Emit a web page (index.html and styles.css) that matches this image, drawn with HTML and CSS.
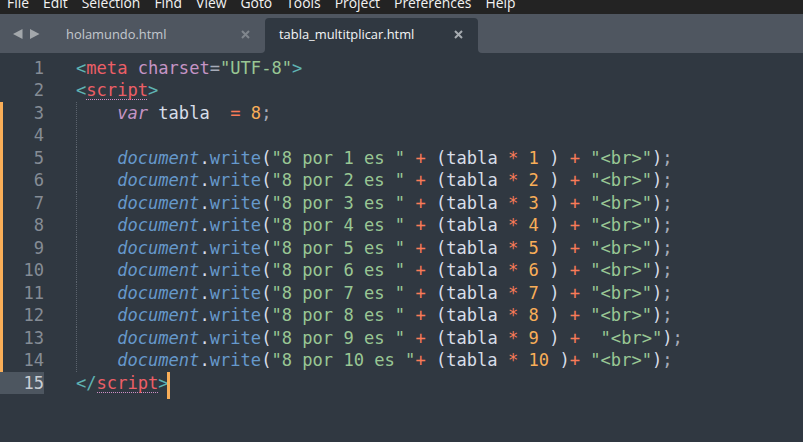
FILE: index.html
```html
<!DOCTYPE html>
<html>
<head>
<meta charset="UTF-8">
<link rel="stylesheet" href="styles.css">
</head>
<body>
<div class="menubar">
  <div class="menu-row">
    <span class="mi">File</span><span class="mi">Edit</span><span class="mi">Selection</span><span class="mi">Find</span><span class="mi">View</span><span class="mi">Goto</span><span class="mi">Tools</span><span class="mi">Project</span><span class="mi">Preferences</span><span class="mi">Help</span>
  </div>
</div>
<div class="tabbar">
  <div class="tabs-left">
    <div class="nav">
      <svg width="10" height="10" viewBox="0 0 10 10"><polygon points="0,5 9.5,0 9.5,10" fill="#a3a7ab"/></svg>
      <svg width="10" height="10" viewBox="0 0 10 10"><polygon points="0,0 9.5,5 0,10" fill="#a3a7ab"/></svg>
    </div>
    <div class="tab">
      <span class="label">holamundo.html</span>
      <svg class="close" width="9" height="9" viewBox="0 0 9 9"><path d="M1 1 L8 8 M8 1 L1 8" stroke="#80868d" stroke-width="2"/></svg>
    </div>
  </div>
  <div class="active-wrap">
    <div class="tab active">
      <span class="label">tabla_multitplicar.html</span>
      <svg class="close" width="9" height="9" viewBox="0 0 9 9"><path d="M1 1 L8 8 M8 1 L1 8" stroke="#a6abb0" stroke-width="2"/></svg>
    </div>
  </div>
  <div class="tabs-right"></div>
</div>
<div class="editor">
  <div class="gutter">
    <div class="ln">1</div>
    <div class="ln">2</div>
    <div class="ln mod">3</div>
    <div class="ln mod">4</div>
    <div class="ln mod">5</div>
    <div class="ln mod">6</div>
    <div class="ln mod">7</div>
    <div class="ln mod">8</div>
    <div class="ln mod">9</div>
    <div class="ln mod">10</div>
    <div class="ln mod">11</div>
    <div class="ln mod">12</div>
    <div class="ln mod">13</div>
    <div class="ln mod">14</div>
    <div class="ln cur">15</div>
  </div>
  <div class="code">
    <div class="line"><span class="p">&lt;</span><span class="t">meta</span> <span class="a">charset</span><span class="eq">=</span><span class="s">"UTF-8"</span><span class="p">&gt;</span></div>
    <div class="line"><span class="p">&lt;</span><span class="t spell">script</span><span class="p">&gt;</span></div>
    <div class="block">
      <div class="line">    <span class="k">var</span> tabla  <span class="o">=</span> <span class="n">8</span><span class="sc">;</span></div>
      <div class="line"> </div>
      <div class="line">    <span class="d">document</span>.<span class="f">write</span>(<span class="s">"8 por 1 es "</span> <span class="o">+</span> (tabla <span class="o">*</span> <span class="n">1</span> ) <span class="o">+</span> <span class="s">"&lt;br&gt;"</span>)<span class="sc">;</span></div>
      <div class="line">    <span class="d">document</span>.<span class="f">write</span>(<span class="s">"8 por 2 es "</span> <span class="o">+</span> (tabla <span class="o">*</span> <span class="n">2</span> ) <span class="o">+</span> <span class="s">"&lt;br&gt;"</span>)<span class="sc">;</span></div>
      <div class="line">    <span class="d">document</span>.<span class="f">write</span>(<span class="s">"8 por 3 es "</span> <span class="o">+</span> (tabla <span class="o">*</span> <span class="n">3</span> ) <span class="o">+</span> <span class="s">"&lt;br&gt;"</span>)<span class="sc">;</span></div>
      <div class="line">    <span class="d">document</span>.<span class="f">write</span>(<span class="s">"8 por 4 es "</span> <span class="o">+</span> (tabla <span class="o">*</span> <span class="n">4</span> ) <span class="o">+</span> <span class="s">"&lt;br&gt;"</span>)<span class="sc">;</span></div>
      <div class="line">    <span class="d">document</span>.<span class="f">write</span>(<span class="s">"8 por 5 es "</span> <span class="o">+</span> (tabla <span class="o">*</span> <span class="n">5</span> ) <span class="o">+</span> <span class="s">"&lt;br&gt;"</span>)<span class="sc">;</span></div>
      <div class="line">    <span class="d">document</span>.<span class="f">write</span>(<span class="s">"8 por 6 es "</span> <span class="o">+</span> (tabla <span class="o">*</span> <span class="n">6</span> ) <span class="o">+</span> <span class="s">"&lt;br&gt;"</span>)<span class="sc">;</span></div>
      <div class="line">    <span class="d">document</span>.<span class="f">write</span>(<span class="s">"8 por 7 es "</span> <span class="o">+</span> (tabla <span class="o">*</span> <span class="n">7</span> ) <span class="o">+</span> <span class="s">"&lt;br&gt;"</span>)<span class="sc">;</span></div>
      <div class="line">    <span class="d">document</span>.<span class="f">write</span>(<span class="s">"8 por 8 es "</span> <span class="o">+</span> (tabla <span class="o">*</span> <span class="n">8</span> ) <span class="o">+</span> <span class="s">"&lt;br&gt;"</span>)<span class="sc">;</span></div>
      <div class="line">    <span class="d">document</span>.<span class="f">write</span>(<span class="s">"8 por 9 es "</span> <span class="o">+</span> (tabla <span class="o">*</span> <span class="n">9</span> ) <span class="o">+</span>  <span class="s">"&lt;br&gt;"</span>)<span class="sc">;</span></div>
      <div class="line">    <span class="d">document</span>.<span class="f">write</span>(<span class="s">"8 por 10 es "</span><span class="o">+</span> (tabla <span class="o">*</span> <span class="n">10</span> )<span class="o">+</span> <span class="s">"&lt;br&gt;"</span>)<span class="sc">;</span></div>
    </div>
    <div class="line"><span class="p">&lt;/</span><span class="t spell">script</span><span class="p">&gt;</span><span class="caret"></span></div>
  </div>
</div>
</body>
</html>
```
FILE: styles.css
```css
html, body {
  margin: 0;
  padding: 0;
  background: #303841;
  overflow: hidden;
}
body {
  width: 803px;
  height: 442px;
}
.menubar {
  height: 14px;
  background: #232323;
  overflow: hidden;
}
.menu-row {
  display: flex;
  margin-top: -4.4px;
  font-family: "Open Sans", sans-serif;
  font-size: 13.9px;
  line-height: 14px;
  color: #f2f2f2;
  white-space: nowrap;
}
.mi {
  padding: 0 7px;
}
.tabbar {
  display: flex;
  height: 39px;
  background: #303841;
  font-family: "Open Sans", sans-serif;
  font-size: 12.9px;
}
.tabs-left {
  display: flex;
  width: 265px;
  background: #4f5660;
  border-bottom-right-radius: 4px;
}
.nav {
  width: 52px;
  box-sizing: border-box;
  display: flex;
  align-items: flex-start;
  padding-left: 13px;
  padding-top: 15.3px;
  gap: 7px;
}
.tab {
  width: 213px;
  box-sizing: border-box;
  display: flex;
  align-items: flex-start;
  padding: 10.85px 15px 0 14px;
  color: #c3c8ce;
  white-space: nowrap;
}
.label {
  line-height: normal;
}
.close {
  margin-left: auto;
  margin-top: 5px;
}
.active-wrap {
  background: #4f5660;
  padding-top: 3.5px;
  display: flex;
}
.tab.active {
  background: #303841;
  border-radius: 4px 4px 0 0;
  padding-top: 7.35px;
  color: #f4f5f6;
  align-self: stretch;
}
.tabs-right {
  flex: 1;
  background: #4f5660;
  border-bottom-left-radius: 4px;
}
.editor {
  display: flex;
  padding-top: 3.75px;
  font-family: "DejaVu Sans Mono", monospace;
  font-size: 17.08px;
  line-height: 22.5px;
}
.gutter {
  width: 68px;
  box-sizing: border-box;
  padding-right: 24px;
  text-align: right;
  color: #858c95;
}
.ln {
  height: 22.5px;
}
.ln.mod {
  box-shadow: inset 3px 0 0 #f9ae58;
}
.ln.cur {
  background: #4d5660;
  color: #c9ced4;
}
.code {
  padding-left: 8px;
  color: #d8dee9;
}
.line {
  height: 22.5px;
  white-space: pre;
}
.block .line {
  background: repeating-linear-gradient(to bottom, #5b636d 0 1px, transparent 1px 2px) 0 0 / 1px 100% no-repeat;
}
.p { color: #5fb3b3; }
.t { color: #ec5f67; }
.a { color: #c594c5; }
.eq { color: #a6acb9; }
.s { color: #99c794; }
.k { color: #c594c5; font-style: italic; }
.o { color: #f97b58; }
.n { color: #f9ae58; }
.sc { color: #a6acb9; }
.d { color: #6699cc; font-style: italic; }
.f { color: #6699cc; }
.spell {
  background: repeating-linear-gradient(to right, #d08fc6 0 1px, transparent 1px 2px) left bottom / 100% 1px no-repeat;
}
.caret {
  display: inline-block;
  width: 3px;
  height: 27.5px;
  margin-bottom: -5px;
  margin-left: -1.5px;
  vertical-align: top;
  background: #f9ae58;
}
```
